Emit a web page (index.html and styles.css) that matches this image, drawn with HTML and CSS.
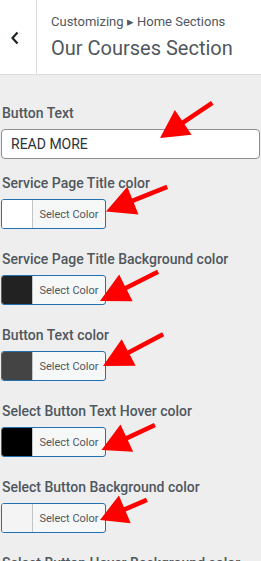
FILE: index.html
```html
<!DOCTYPE html>
<html lang="en">
    <head>
        <meta charset="utf-8">
        <title>Our Courses Section</title>
        <link rel="stylesheet" href="styles.css">
    </head>
    <body>
        <div class="header">
            <button class="back" type="button">
                <svg width="10" height="14" viewBox="0 0 10 14"><path d="M7.5 1.5 L2.5 7 L7.5 12.5" fill="none" stroke="#1d2327" stroke-width="2.2"/></svg>
            </button>
            <div class="titles">
                <div class="crumb">Customizing &#9656; Home Sections</div>
                <div class="title">Our Courses Section</div>
            </div>
        </div>

        <div class="controls">
            <div class="field text-field">
                <label>Button Text</label>
                <input type="text" value="READ MORE">
            </div>
            <div class="field">
                <label>Service Page Title color</label>
                <button class="picker" type="button"><span class="swatch sw-white"></span><span class="pick-text">Select Color</span></button>
            </div>
            <div class="field">
                <label>Service Page Title Background color</label>
                <button class="picker" type="button"><span class="swatch sw-dark"></span><span class="pick-text">Select Color</span></button>
            </div>
            <div class="field">
                <label>Button Text color</label>
                <button class="picker" type="button"><span class="swatch sw-grey"></span><span class="pick-text">Select Color</span></button>
            </div>
            <div class="field">
                <label>Select Button Text Hover color</label>
                <button class="picker" type="button"><span class="swatch sw-black"></span><span class="pick-text">Select Color</span></button>
            </div>
            <div class="field">
                <label>Select Button Background color</label>
                <button class="picker" type="button"><span class="swatch sw-light"></span><span class="pick-text">Select Color</span></button>
            </div>
            <div class="field">
                <label>Select Button Hover Background color</label>
            </div>
        </div>

        <!-- red pointer arrows drawn over the screenshot -->
        <svg class="arrows" width="261" height="561" viewBox="0 0 261 561">
            <g fill="#ff0000">
                <path transform="translate(160 138) rotate(146.1)" d="M0 0 L-28 -15 L-28 -2.3 L-63 -2.3 L-63 2.3 L-28 2.3 L-28 15 Z"/>
                <path transform="translate(106 211.5) rotate(158.1)" d="M0 0 L-29 -15 L-29 -2.3 L-66 -2.3 L-66 2.3 L-29 2.3 L-29 15 Z"/>
                <path transform="translate(100 301) rotate(153.3)" d="M0 0 L-29 -15 L-29 -2.3 L-65 -2.3 L-65 2.3 L-29 2.3 L-29 15 Z"/>
                <path transform="translate(103 366) rotate(152.2)" d="M0 0 L-29 -15 L-29 -2.3 L-68 -2.3 L-68 2.3 L-29 2.3 L-29 15 Z"/>
                <path transform="translate(101.5 450) rotate(154.9)" d="M0 0 L-28 -15 L-28 -2.3 L-59 -2.3 L-59 2.3 L-28 2.3 L-28 15 Z"/>
                <path transform="translate(100 520) rotate(156.8)" d="M0 0 L-27 -15 L-27 -2.3 L-51 -2.3 L-51 2.3 L-27 2.3 L-27 15 Z"/>
            </g>
        </svg>
    </body>
</html>
```

FILE: styles.css
```css
*{
    box-sizing: border-box;
}
body{
    margin: 0;
    position: relative;
    width: 261px;
    height: 561px;
    overflow: hidden;
    background-color: #eeeeee;
    font-family: Roboto, "Liberation Sans", sans-serif;
    color: #50575e;
}
.header{
    display: flex;
    height: 75px;
    background-color: #ffffff;
    border-bottom: 1px solid #dcdcde;
}
.back{
    width: 37px;
    padding: 0;
    display: flex;
    align-items: center;
    justify-content: center;
    background: none;
    border: none;
    border-right: 1px solid #dcdcde;
    margin-right: 14px;
}
.back svg{
    margin-left: -6px;
    margin-top: 1px;
}
.titles{
    padding-top: 14px;
}
.crumb{
    font-size: 13px;
    line-height: 16px;
}
.title{
    font-size: 20px;
    line-height: 26px;
    margin-top: 5px;
}
.controls{
    padding: 28px 1px 0 1px;
}
.field{
    margin-bottom: 20px;
}
.text-field{
    margin-bottom: 14px;
}
.field label{
    display: block;
    font-size: 14px;
    font-weight: 500;
    line-height: 20px;
    margin-bottom: 6px;
    padding-left: 1px;
}
.field input{
    display: block;
    width: 100%;
    height: 30px;
    padding: 0 9px;
    font-family: Roboto, "Liberation Sans", sans-serif;
    font-size: 14px;
    color: #2c3338;
    background-color: #ffffff;
    border: 1px solid #8c8f94;
    border-radius: 4px;
}
.picker{
    display: flex;
    width: 105px;
    height: 30px;
    padding: 0;
    border: 1px solid #2271b1;
    border-radius: 3px;
    overflow: hidden;
    background-color: #f6f7f7;
    font-family: Roboto, "Liberation Sans", sans-serif;
}
.swatch{
    width: 31px;
    height: 100%;
    border-right: 1px solid #c3c4c7;
}
.pick-text{
    flex: 1;
    align-self: center;
    font-size: 11px;
    color: #50575e;
    text-align: center;
}
.sw-white{ background-color: #ffffff; }
.sw-dark{ background-color: #222222; }
.sw-grey{ background-color: #444444; }
.sw-black{ background-color: #000000; }
.sw-light{ background-color: #f4f4f4; }
.arrows{
    position: absolute;
    top: 0;
    left: 0;
    pointer-events: none;
}
```
